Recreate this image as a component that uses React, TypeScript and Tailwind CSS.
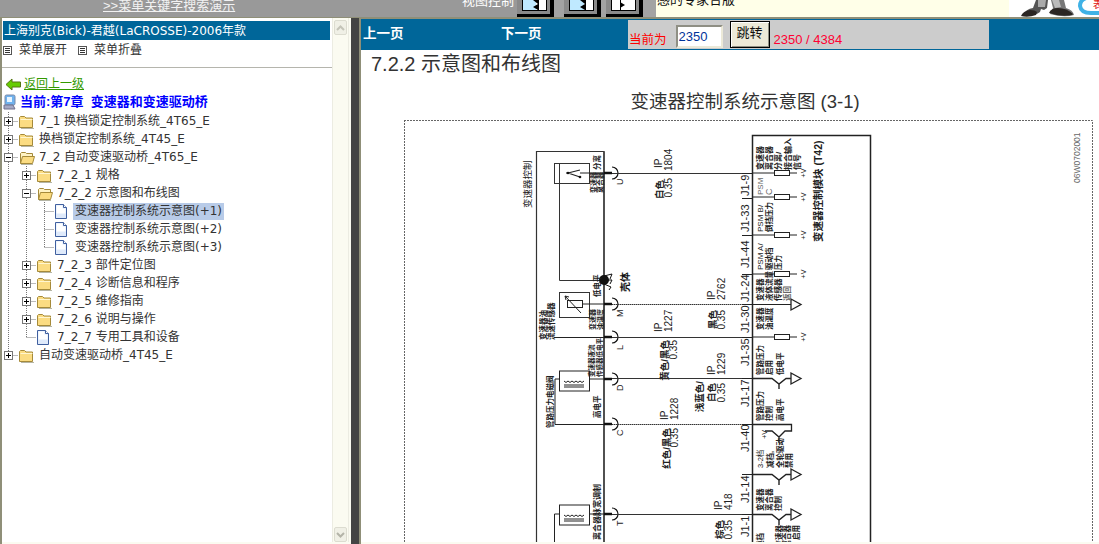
import type { ReactNode } from "react";

type CellKind = "I" | "T" | "L" | "P" | "PL" | "M" | "B";
type Row = { cells: CellKind[]; icon: "folder" | "open" | "doc"; text: string; selected?: boolean };

const tree: Row[] = [
  { cells: ["P"], icon: "folder", text: "7_1 换档锁定控制系统_4T65_E" },
  { cells: ["P"], icon: "folder", text: "换档锁定控制系统_4T45_E" },
  { cells: ["M"], icon: "open", text: "7_2 自动变速驱动桥_4T65_E" },
  { cells: ["I", "P"], icon: "folder", text: "7_2_1 规格" },
  { cells: ["I", "M"], icon: "open", text: "7_2_2 示意图和布线图" },
  { cells: ["I", "I", "T"], icon: "doc", text: "变速器控制系统示意图(+1)", selected: true },
  { cells: ["I", "I", "T"], icon: "doc", text: "变速器控制系统示意图(+2)" },
  { cells: ["I", "I", "L"], icon: "doc", text: "变速器控制系统示意图(+3)" },
  { cells: ["I", "P"], icon: "folder", text: "7_2_3 部件定位图" },
  { cells: ["I", "P"], icon: "folder", text: "7_2_4 诊断信息和程序" },
  { cells: ["I", "P"], icon: "folder", text: "7_2_5 维修指南" },
  { cells: ["I", "P"], icon: "folder", text: "7_2_6 说明与操作" },
  { cells: ["I", "L"], icon: "doc", text: "7_2_7 专用工具和设备" },
  { cells: ["PL"], icon: "folder", text: "自动变速驱动桥_4T45_E" },
];

function TreeCell({ kind }: { kind: CellKind }) {
  const dots = { stroke: "#777", strokeWidth: 1, strokeDasharray: "1 1", fill: "none" };
  const boxed = kind === "P" || kind === "PL" || kind === "M";
  return (
    <svg width="18" height="18" className="shrink-0">
      {(kind === "I" || kind === "T" || kind === "P" || kind === "M") && <line x1="8.5" y1="0" x2="8.5" y2="18" {...dots} />}
      {(kind === "L" || kind === "PL") && <line x1="8.5" y1="0" x2="8.5" y2="9" {...dots} />}
      {(kind === "T" || kind === "L" || boxed) && <line x1="8.5" y1="9.5" x2="18" y2="9.5" {...dots} />}
      {boxed && (
        <>
          <rect x="4.5" y="5.5" width="8" height="8" fill="#fff" stroke="#777" />
          <line x1="6" y1="9.5" x2="11" y2="9.5" stroke="#000" />
          {kind !== "M" && <line x1="8.5" y1="7" x2="8.5" y2="12" stroke="#000" />}
        </>
      )}
    </svg>
  );
}

function TreeIcon({ icon }: { icon: Row["icon"] }) {
  if (icon === "doc") {
    return (
      <svg width="18" height="18" className="shrink-0">
        <path d="M1.5 2.5h8l3 3v11h-11z" fill="#dfeafb" stroke="#3f5f9f" />
        <path d="M2.5 3.5h6v3h3v5h-9z" fill="#fff" />
        <path d="M9.5 2.5v3h3" fill="#fff" stroke="#3f5f9f" />
      </svg>
    );
  }
  if (icon === "open") {
    return (
      <svg width="18" height="18" className="shrink-0">
        <path d="M2.5 15.5v-10l1-1h4l1 1h6v3" fill="#fff3c4" stroke="#a58a3a" />
        <path d="M2.5 15.5l2-7h12l-2 7z" fill="#fbdc82" stroke="#a58a3a" />
        <path d="M3 16.5h12" stroke="#b5b5a5" />
      </svg>
    );
  }
  return (
    <svg width="18" height="18" className="shrink-0">
      <path d="M1.5 15.5v-10l1-1h4l1.5 1.5h6.5v9.500z" fill="#fbdc82" stroke="#a58a3a" />
      <path d="M2.5 7.5h12" stroke="#fff6d0" />
      <path d="M3 16.5h13" stroke="#b5b5a5" />
    </svg>
  );
}

function MenuGlyph() {
  return (
    <svg width="9" height="9" className="shrink-0">
      <rect x="0.5" y="0.5" width="8" height="8" fill="#fff" stroke="#555" />
      <path d="M2 2.5h5M2 4.5h5M2 6.5h5" stroke="#333" />
    </svg>
  );
}

function NavButton({ children }: { children: ReactNode }) {
  return (
    <div className="h-[17px] w-[37px] shrink-0 border-r-[4px] border-b-[3px] border-black bg-[#8a8a8a]">
      <div className="ml-[5px] h-[11px] w-[25px] border-x border-b border-black bg-white">{children}</div>
    </div>
  );
}

// blue pane left of the divider, arrow head on it
function NavFace({ blue, divider, head }: { blue: number; divider: number; head: string }) {
  return (
    <svg width="23" height="10">
      <rect x="0" y="0" width={blue} height="10" fill="#bfe9ff" />
      <path d={head} fill="#000" />
      <path d={`M${divider} 0v10`} stroke="#000" />
    </svg>
  );
}

// x is the baseline of the rotated text, y its foot (or its head with "end")
type Label = [number, number, string, number?, "start" | "end" | "middle"?, string?, number?];

const labels: Label[] = [
  [531, 208, "变速器控制", 9.5],
  [662, 168, "IP", 10],
  [672, 171, "1804", 10],
  [663, 180, "白色", 9.5, "end", "#222", 700],
  [672, 178, "0.35", 10, "end"],
  [715, 300, "IP", 10],
  [725, 300, "2762", 10],
  [716, 310, "黑色", 9.5, "end", "#222", 700],
  [725, 310, "0.35", 10, "end"],
  [662, 332, "IP", 10],
  [672, 332, "1227", 10],
  [668, 340, "黄色/黑色", 9.5, "end", "#222", 700],
  [677, 340, "0.35", 10, "end"],
  [715, 375, "IP", 10],
  [725, 375, "1229", 10],
  [703, 381, "浅蓝色/", 9.5, "end", "#222", 700],
  [715, 383, "白色", 9.5, "end", "#222", 700],
  [725, 383, "0.35", 10, "end"],
  [668, 420, "IP", 10],
  [678, 420, "1228", 10],
  [670, 428, "红色/黑色", 9.5, "end", "#222", 700],
  [678, 428, "0.35", 10, "end"],
  [722, 510, "IP", 10],
  [732, 510, "418", 10],
  [723, 520, "棕色", 9.5, "end", "#222", 700],
  [732, 520, "0.35", 10, "end"],
  [749, 196, "J1-9", 11],
  [749, 232, "J1-33", 11],
  [749, 268, "J1-44", 11],
  [749, 302, "J1-24", 11],
  [749, 333, "J1-30", 11],
  [749, 366, "J1-35", 11],
  [749, 407, "J1-17", 11],
  [749, 452, "J1-40", 11],
  [749, 503, "J1-14", 11],
  [749, 537, "J1-1", 11],
  [763, 170, "变速器", 8, "start", "#222", 700],
  [772, 170, "离合器", 8, "start", "#222", 700],
  [781, 170, "分离/", 8, "start", "#222", 700],
  [791, 170, "接合输入", 8, "start", "#222", 700],
  [800, 170, "信号", 8, "start", "#222", 700],
  [763, 195, "PSM", 8, "start", "#666"],
  [772, 195, "C", 9, "start", "#666"],
  [763, 232, "PSM  B/", 8],
  [772, 232, "倒挡压力", 7.5, "start", "#222", 700],
  [763, 270, "PSM  A/", 8],
  [772, 270, "驱动档", 7.5, "start", "#222", 700],
  [781, 270, "压力", 7.5, "start", "#222", 700],
  [763, 301, "变速器", 7.5, "start", "#222", 700],
  [772, 301, "液体流量", 7.5, "start", "#222", 700],
  [781, 301, "传感器", 7.5, "start", "#222", 700],
  [790, 301, "返回", 7.5, "start", "#666", 700],
  [763, 330, "变速器", 7.5, "start", "#222", 700],
  [772, 330, "油温度", 7.5, "start", "#222", 700],
  [763, 375, "管路压力", 7.5, "start", "#222", 700],
  [772, 375, "启用", 7.5, "start", "#222", 700],
  [783, 375, "低电平", 7.5, "start", "#222", 700],
  [763, 421, "管路压力", 7.5, "start", "#222", 700],
  [772, 421, "控制", 7.5, "start", "#222", 700],
  [783, 421, "高电平", 7.5, "start", "#222", 700],
  [763, 468, "3-2档", 7.5],
  [773, 468, "减档,", 7.5, "start", "#222", 700],
  [783, 468, "全轮驱动", 7.5, "start", "#222", 700],
  [792, 468, "禁用", 7.5, "start", "#222", 700],
  [763, 511, "变速器", 7.5, "start", "#222", 700],
  [772, 511, "离合器", 7.5, "start", "#222", 700],
  [781, 511, "控制", 7.5, "start", "#222", 700],
  [763, 533, "换档", 7.5, "end", "#222", 700],
  [782, 525, "变速器", 7.5, "end", "#222", 700],
  [790, 525, "离合器", 7.5, "end", "#222", 700],
  [799, 525, "启用", 7.5, "end", "#222", 700],
  [767, 430, "+V", 7, "end"],
  [806, 173, "+V", 7, "middle"],
  [806, 197, "+V", 7, "middle"],
  [806, 235, "+V", 7, "middle"],
  [806, 274, "+V", 7, "middle"],
  [806, 337, "+V", 7, "middle"],
  [822, 242, "变速器控制模块  (T42)", 10.5, "start", "#222", 700],
  [600, 170, "分离", 7.5, "start", "#222", 700],
  [596, 193, "变速器", 7, "start", "#222", 700],
  [603, 193, "离合器", 7, "start", "#222", 700],
  [600, 297, "低电平", 7.5, "start", "#222", 700],
  [629, 292, "壳体", 10, "start", "#111", 700],
  [595, 330, "变速器", 7, "start", "#222", 700],
  [603, 330, "油温度", 7, "start", "#222", 700],
  [546, 340, "变速器油", 7.5, "start", "#222", 700],
  [554, 340, "流速传感器", 7.5, "start", "#222", 700],
  [594, 377, "变速器液流", 6.5, "start", "#222", 700],
  [602, 377, "传感器低电平", 6.5, "start", "#222", 700],
  [553, 428, "管路压力电磁阀", 7.5, "start", "#222", 700],
  [600, 418, "高电平", 7.5, "start", "#222", 700],
  [600, 540, "离合器脉宽调制", 8, "start", "#222", 700],
  [623, 185, "U", 9],
  [623, 317, "M", 9],
  [623, 350, "L", 9],
  [623, 391, "D", 9],
  [623, 436, "C", 9],
  [623, 526, "T", 9],
  [1080, 183, "06W0702001", 8.5, "start", "#666"],
];

const pins = [173, 304, 337, 379, 424, 514];
const resistors = [173, 197, 235, 274, 337];
const drivers = [378, 474, 514];
const ticks = [173, 198, 235, 274, 304, 337, 378, 424, 474, 514];

function Coil({ y }: { y: number }) {
  return (
    <>
      <rect x="559.5" y={y - 8} width="30" height="20" fill="#fff" stroke="#222" />
      <path d={`M564 ${y + 2}q2 3 4 0q2 3 4 0q2 3 4 0q2 3 4 0q2 3 4 0`} fill="none" stroke="#222" />
      <path d={`M564 ${y + 6}h20M564 ${y + 8}h20`} stroke="#222" />
    </>
  );
}

function Diagram() {
  return (
    <svg
      viewBox="404 120 695 424"
      width="695"
      height="424"
      className="block font-['Liberation_Sans','Noto_Sans_CJK_SC',sans-serif]"
    >
      <path d="M404 120.5H1092.5V544M404.5 120V544" fill="none" stroke="#666" strokeDasharray="2 1" />

      <path d="M604 544V151.5H536.5V544" fill="none" stroke="#333" strokeWidth="1.2" />
      <path d="M604 151.5V544" stroke="#444" strokeWidth="1.6" />
      <path d="M752.5 544V135.5H870.5V544" fill="none" stroke="#222" strokeWidth="1.5" />

      <rect x="554.5" y="163.5" width="35" height="20" fill="none" stroke="#333" />
      <path d="M559.5 163V280.5H604" fill="none" stroke="#333" />
      <path d="M566 173h2l12 -3M580 177l-12 -4M580 173h24" fill="none" stroke="#222" strokeWidth="1.2" />
      <circle cx="568" cy="173" r="1.3" fill="#111" />
      <circle cx="580" cy="177" r="1.3" fill="#111" />

      <circle cx="604" cy="280" r="5" fill="#111" />
      <path d="M604 276l8-2-2 5M604 280h8l-2 4M604 284l7 3-2 3" fill="none" stroke="#111" />

      <rect x="559.5" y="292.5" width="30" height="25" fill="#fff" stroke="#333" />
      <rect x="567.5" y="300.5" width="15" height="7" fill="#fff" stroke="#222" />
      <path d="M581 313L565 296M565 296l1 4M565 296l4 1" fill="none" stroke="#222" />
      <path d="M582 304h22" stroke="#222" />

      <path d="M554 337.5H604" stroke="#222" />
      <Coil y={379} />
      <path d="M589 379H604" stroke="#222" />
      <path d="M559 379H555V424.5H604" fill="none" stroke="#222" />
      <Coil y={513} />
      <path d="M589 514H604" stroke="#222" />
      <path d="M559 514H554.5V544" fill="none" stroke="#222" />

      {pins.map((y) => (
        <g key={y}>
          <path d={`M604 ${y}h8`} stroke="#111" strokeWidth="2.5" />
          <path d={`M612 ${y - 6}a6 6 0 0 1 0 12`} fill="none" stroke="#111" strokeWidth="1.2" />
        </g>
      ))}

      <path d="M612 173.5H752" stroke="#333" />
      <path d="M612 304.5H752" stroke="#333" strokeDasharray="1.5 0.5" />
      <path d="M612 337.5H752" stroke="#333" />
      <path d="M612 378.5H752" stroke="#333" />
      <path d="M612 424.5H752" stroke="#333" strokeDasharray="1.5 0.5" />
      <path d="M612 514.5H752" stroke="#333" />

      {ticks.map((y) => (
        <path key={y} d={`M742 ${y + 0.5}H752`} stroke="#222" />
      ))}

      {resistors.map((y) => (
        <g key={y}>
          <path d={`M752 ${y}H774M789 ${y}H797`} stroke="#222" />
          <rect x="774.5" y={y - 2.5} width="15" height="5" fill="#fff" stroke="#222" />
        </g>
      ))}

      <path d="M752 304.5H791" stroke="#222" />
      <path d="M791 299l10 5.5-10 5.5z" fill="#fff" stroke="#222" strokeWidth="1.3" />

      {drivers.map((y) => (
        <g key={y}>
          <path
            d={`M752 ${y + 0.5}H772L779 ${y + 6}L786 ${y + 0.5}H791M779 ${y + 6}V${y + 11}`}
            fill="none"
            stroke="#222"
            strokeWidth="1.4"
          />
          <path d={`M791 ${y - 5}l10 5.5-10 5.5z`} fill="#fff" stroke="#222" strokeWidth="1.3" />
        </g>
      ))}
      <path d="M752 424.5H791.5V431H785L779 437L772 431H765M779 437V443" fill="none" stroke="#222" strokeWidth="1.3" />

      {labels.map(([x, y, text, size = 8, anchor = "start", color = "#222", weight = 400], i) => (
        <text
          key={i}
          x={x}
          y={y}
          fontSize={size}
          fill={color}
          fontWeight={weight}
          textAnchor={anchor}
          transform={`rotate(-90 ${x} ${y})`}
        >
          {text}
        </text>
      ))}
    </svg>
  );
}

export default function App() {
  return (
    <div className="flex h-[544px] w-[1099px] flex-col overflow-hidden bg-white font-['DejaVu_Sans','Noto_Sans_CJK_SC',sans-serif] text-[12px] text-[#333]">
      {/* top strip, cut off by the frame above it */}
      <div className="flex h-[18px] shrink-0 overflow-hidden border-b border-[#8f8f78] bg-[#999] font-['Liberation_Sans','Noto_Sans_CJK_SC',sans-serif]">
        <div className="ml-[103px] mt-[-3px] w-[359px] text-[13px] leading-[18px] text-[#f2f2f2] underline">
          {">>菜单关键字搜索演示"}
        </div>
        <div className="mt-[-8px] w-[55px] text-[13px] leading-[18px] text-white">视图控制</div>
        <div className="flex w-[139px] shrink-0 gap-[10px] bg-[#a3a3a3]">
          <NavButton>
            <NavFace blue={13} divider={15.5} head="M15 4l-5-4h5z M15 4l-5 3 5 3z" />
          </NavButton>
          <NavButton>
            <NavFace blue={14} divider={15.5} head="M15 0l-5 0 5 4z M15 4l-5 3 5 3z" />
          </NavButton>
          <div className="-ml-[5px]">
            <NavButton>
              <NavFace blue={0} divider={8.5} head="M8 2l5 3-5 3z" />
            </NavButton>
          </div>
        </div>
        <div className="h-full w-[353px] shrink-0 bg-[#ffffe8] pl-[1px]">
          <div className="mt-[-9px] text-[13px] leading-[18px] text-[#111]">感的专家合版</div>
        </div>
        <div className="flex-1 bg-white">
          <svg width="90" height="17" viewBox="0 0 90 17">
            <path d="M14 15q3-6 10-7l3-8h12l-1 8-3 2-3-1-1 3q-6 5-17 3z" fill="#555" />
            <path d="M29 0h8l-1 7h-7z" fill="#aaa" />
            <path d="M12 16q2-5 9-6 5 0 7 2l-1 3q-8 3-15 1z" fill="#2b2623" />
            <path d="M42 0h13l2 8q7 2 8 7-10 3-24-1l3-6z" fill="#777" />
            <path d="M43 0h7l2 7-6 1z" fill="#bbb" />
            <path d="M40 13q2-5 9-5 9 0 15 6l-1 1q-12 2-23-2z" fill="#2b2623" />
            <path d="M90 -3h-8q-11 1-11 9 1 7 11 7h8" fill="none" stroke="#3fb2e6" strokeWidth="4" />
            <text x="84" y="8" fontSize="10" fill="#e01010">
              表
            </text>
          </svg>
        </div>
      </div>

      <div className="flex min-h-0 flex-1">
        {/* left tree frame */}
        <div className="flex w-[351px] shrink-0 border-l-2 border-[#8f8f78] bg-[#fbfbf1] pb-[2px]">
          <div className="w-[330px] shrink-0 bg-white">
            <div className="ml-[1px] mt-[3px] flex h-[19px] w-[327px] items-center bg-[#006699] pl-[1px] text-white">
              上海别克(Bick)-君越(LaCROSSE)-2006年款
            </div>
            <div className="flex h-[20px] items-center pl-[1px]">
              <MenuGlyph />
              <span className="ml-[7px] mr-[11px]">菜单展开</span>
              <MenuGlyph />
              <span className="ml-[7px]">菜单折叠</span>
            </div>
            <div className="mt-[7px] h-[1px] bg-[#b5b5ad]" />
            <div className="pt-[7px]">
              <div className="flex h-[18px] items-center pl-[3px]">
                <svg width="17" height="13" className="shrink-0">
                  <path d="M1 6.5L7 1v3h8.5v5H7v3z" fill="#66cc00" stroke="#557711" />
                </svg>
                <span className="ml-[2px] text-[#339900] underline">返回上一级</span>
              </div>
              <div className="flex h-[18px] items-center pl-[1px]">
                <svg width="14" height="16" className="shrink-0">
                  <rect x="2" y="1" width="10" height="10" rx="1.5" fill="#6fb2ee" stroke="#7a8aa8" />
                  <rect x="4" y="3" width="5" height="5" fill="#e6f4ff" />
                  <path d="M1 11h9l2 4H1z" fill="#a4a8c4" stroke="#70708c" />
                </svg>
                <span className="ml-[3px] font-['Liberation_Sans','Noto_Sans_CJK_SC',sans-serif] text-[13px] font-bold text-[#0000ff]">
                  当前:第7章&nbsp;&nbsp;变速器和变速驱动桥
                </span>
              </div>
              <div className="-ml-[2px] mt-[1px]">
                {tree.map((row) => (
                  <div key={row.text} className="flex h-[18px] items-center">
                    {row.cells.map((kind, i) => (
                      <TreeCell key={i} kind={kind} />
                    ))}
                    <TreeIcon icon={row.icon} />
                    <span
                      className={
                        row.selected
                          ? "ml-[1px] flex h-[17px] items-center whitespace-nowrap bg-[#b8cbe8] px-[2px]"
                          : "ml-[3px] whitespace-nowrap"
                      }
                    >
                      {row.text}
                    </span>
                  </div>
                ))}
              </div>
            </div>
          </div>

          {/* scrollbar */}
          <div className="flex w-[17px] shrink-0 flex-col justify-between border-x border-[#ecece2] px-[1px] pt-[2px]">
            <div className="flex h-[15px] items-center justify-center rounded-[2px] border border-[#dcdcd0] bg-[#f0f0e6]">
              <svg width="9" height="6">
                <path d="M1 5l3.5-3.5L8 5" fill="none" stroke="#c4c4b8" strokeWidth="2" />
              </svg>
            </div>
            <div className="flex h-[15px] items-center justify-center rounded-[2px] border border-[#dcdcd0] bg-[#f0f0e6]">
              <svg width="9" height="6">
                <path d="M1 1l3.5 3.5L8 1" fill="none" stroke="#b4b4a8" strokeWidth="2" />
              </svg>
            </div>
          </div>
        </div>

        {/* splitter */}
        <div className="w-[8px] shrink-0 bg-[#444]" />

        {/* right page */}
        <div className="flex min-w-0 flex-1 flex-col border-l-2 border-t border-[#8f8f78] bg-[#fbfbf1] pb-[2px] font-['Liberation_Sans','Noto_Sans_CJK_SC',sans-serif]">
          <div className="flex h-[31px] shrink-0 bg-[#006699] py-[1px]">
            <div className="flex w-[267px] shrink-0 items-center text-[13.5px] font-bold text-white">
              <span className="ml-[2px] w-[138px]">上一页</span>
              <span>下一页</span>
            </div>
            <div className="flex w-[361px] shrink-0 items-start bg-[#cccccc]">
              <span className="ml-[1px] mt-[11px] text-[12.5px] text-[#ff0000]">当前为</span>
              <input
                readOnly
                value="2350"
                className="ml-[9px] mt-[5px] h-[23px] w-[47px] border-2 border-t-[#8f8f84] border-l-[#8f8f84] border-r-[#ece9d8] border-b-[#ece9d8] bg-white pl-[1px] text-[13px] text-[#003399] outline-none"
              />
              <button className="ml-[7px] mt-[1px] h-[27px] w-[40px] border border-black bg-[#ece9d8] pb-[4px] text-[13px] text-[#111] shadow-[inset_1px_1px_0_#fff,inset_-1px_-1px_0_#8f8f84]">
                跳转
              </button>
              <span className="ml-[4px] mt-[10px] text-[13px] text-[#ff0033]">2350 / 4384</span>
            </div>
          </div>
          <div className="min-h-0 flex-1 overflow-hidden bg-white">
            <h1 className="ml-[10px] mt-[1px] text-[20px] font-normal leading-[26px] text-[#333]">7.2.2 示意图和布线图</h1>
            <h2 className="ml-[43px] mt-[13px] w-[682px] text-center text-[18.5px] font-normal leading-[24px] text-[#333]">
              变速器控制系统示意图 (3-1)
            </h2>
            <div className="ml-[43px] mt-[6px]">
              <Diagram />
            </div>
          </div>
        </div>
      </div>
    </div>
  );
}
